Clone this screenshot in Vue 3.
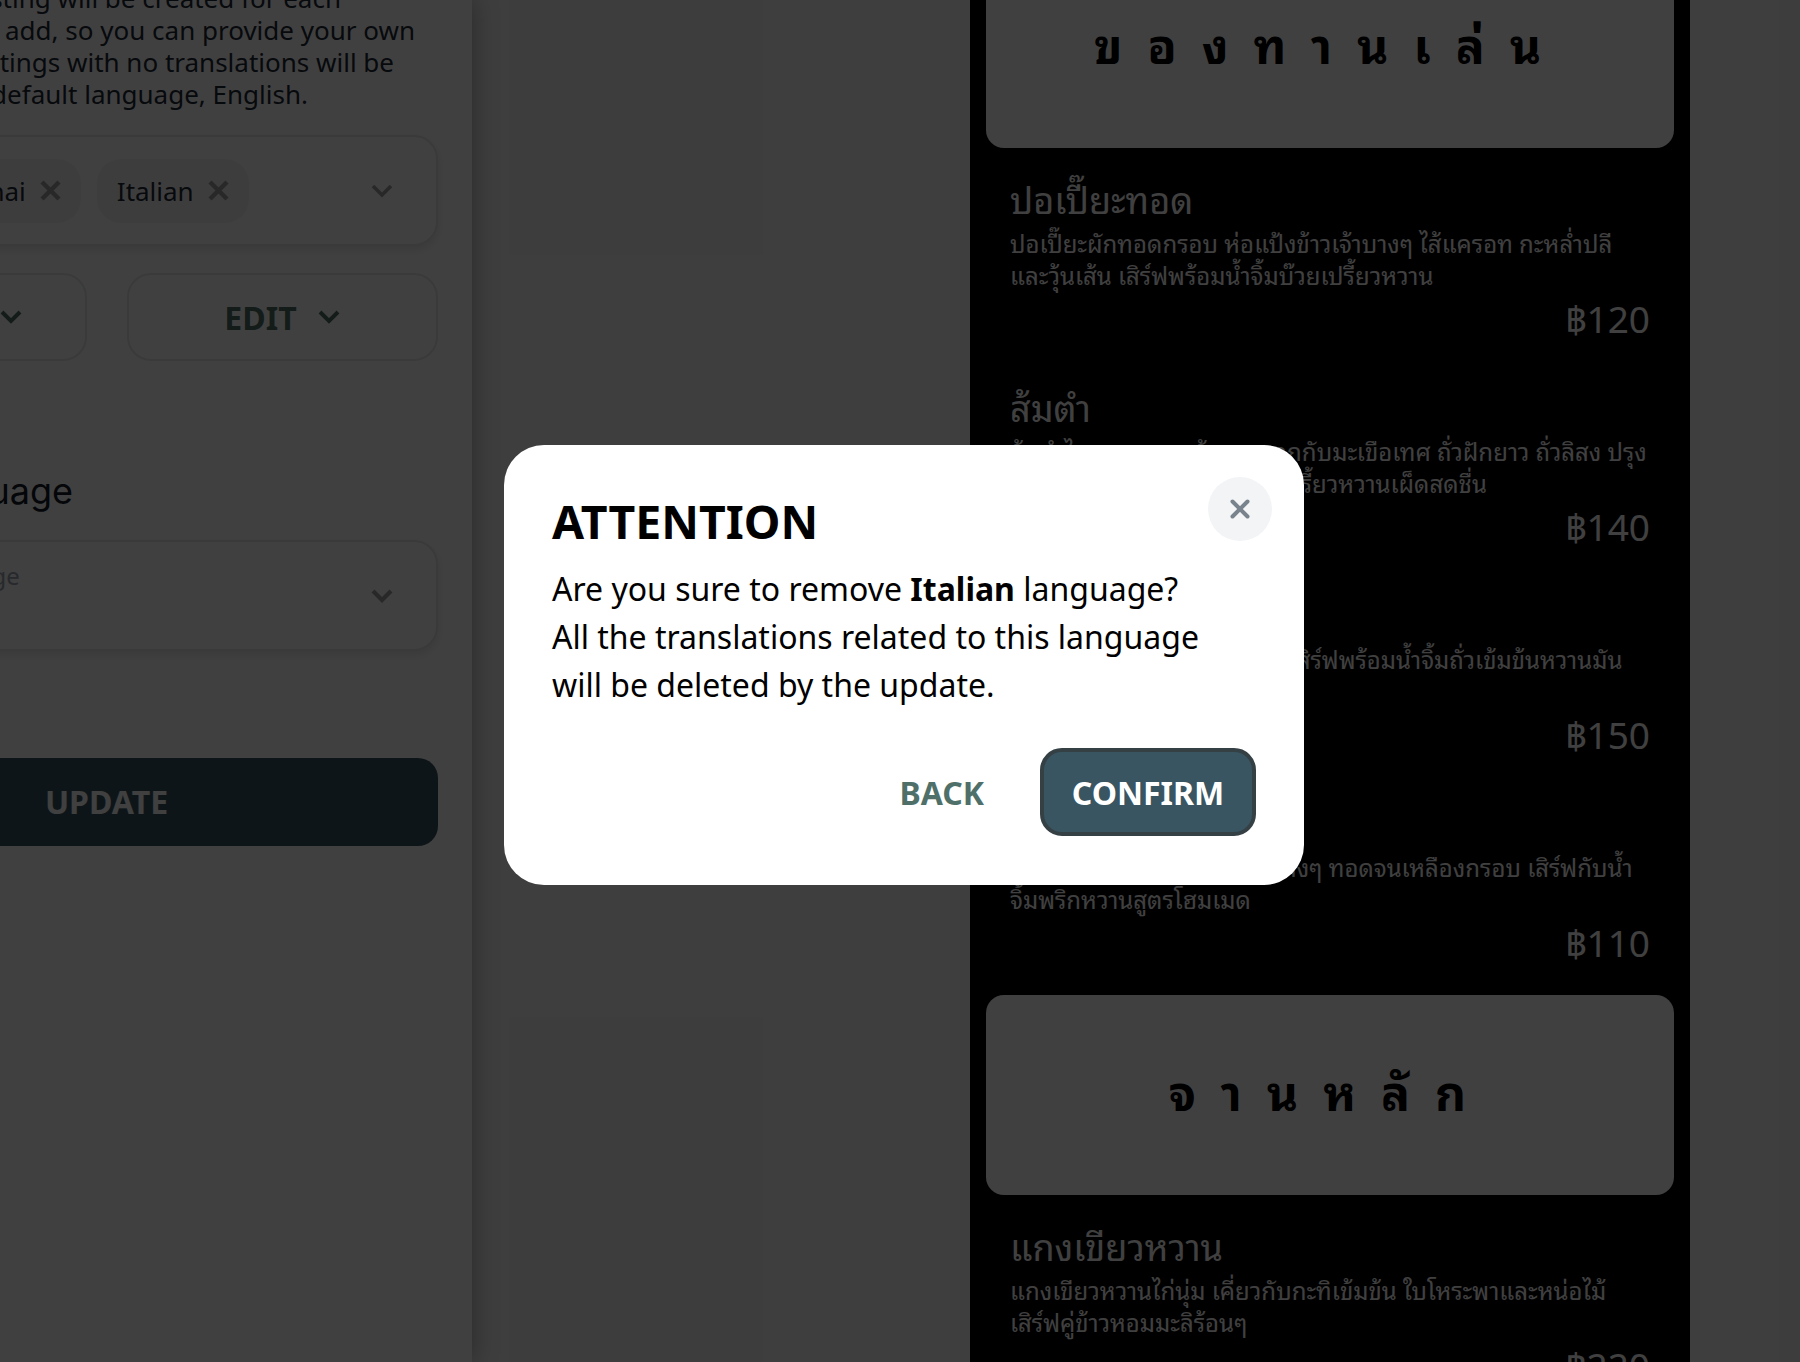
<script setup>
const items1 = [
  { name: 'ปอเปี๊ยะทอด', desc: ['ปอเปี๊ยะผักทอดกรอบ ห่อแป้งข้าวเจ้าบางๆ ไส้แครอท กะหล่ำปลี', 'และวุ้นเส้น เสิร์ฟพร้อมน้ำจิ้มบ๊วยเปรี้ยวหวาน'], price: '฿120' },
  { name: 'ส้มตำ', desc: ['ส้มตำไทย มะละกอเส้นสด คลุกกับมะเขือเทศ ถั่วฝักยาว ถั่วลิสง ปรุง', 'รสด้วยน้ำปลาและมะนาว\u00a0 รสเปรี้ยวหวานเผ็ดสดชื่น'], price: '฿140' },
  { name: 'หมูสะเต๊ะ', desc: ['หมูหมักเครื่องเทศย่างหอมๆ เสิร์ฟพร้อมน้ำจิ้มถั่วเข้มข้นหวานมัน', 'และอาจาดแตงกวา'], price: '฿150' },
  { name: 'ทอดมันกุ้ง', desc: ['ทอดมันกุ้ง ชุบเกล็ดขนมปังบางๆ ทอดจนเหลืองกรอบ เสิร์ฟกับน้ำ', 'จิ้มพริกหวานสูตรโฮมเมด'], price: '฿110' },
]
const items2 = [
  { name: 'แกงเขียวหวาน', desc: ['แกงเขียวหวานไก่นุ่ม เคี่ยวกับกะทิเข้มข้น ใบโหระพาและหน่อไม้', 'เสิร์ฟคู่ข้าวหอมมะลิร้อนๆ'], price: '฿220' },
]
</script>

<template>
  <div class="page">
    <aside class="settings">
      <div class="settings-inner">
        <p class="help">
          <span class="l1">A new listing will be created for each</span>
          <span class="l2">language you add, so you can provide your own</span>
          <span class="l3">Listings with no translations will be</span>
          <span class="l4">shown in the default language, English.</span>
        </p>
        <div class="select multi">
          <div class="chip"><span>Thai</span><svg class="x" viewBox="0 0 21 21"><path d="M2 2l17 17M19 2L2 19" /></svg></div>
          <div class="chip"><span>Italian</span><svg class="x" viewBox="0 0 21 21"><path d="M2 2l17 17M19 2L2 19" /></svg></div>
          <svg class="chev grey" viewBox="0 0 24 24"><path d="M3 7l9 9 9-9" /></svg>
        </div>
        <div class="btn-row">
          <button class="outline">PREVIEW<svg class="chev teal" viewBox="0 0 24 24"><path d="M3 7l9 9 9-9" /></svg></button>
          <button class="outline edit">EDIT<svg class="chev teal" viewBox="0 0 24 24"><path d="M3 7l9 9 9-9" /></svg></button>
        </div>
        <h2 class="heading">Default language</h2>
        <div class="select single">
          <span class="placeholder">Select language</span>
          <svg class="chev grey thick" viewBox="0 0 24 24"><path d="M3 7l9 9 9-9" /></svg>
        </div>
        <button class="update">UPDATE</button>
      </div>
    </aside>

    <main class="menu">
      <div class="menu-inner">
        <div class="section"><span>ของทานเล่น</span></div>
        <div v-for="it in items1" :key="it.name" class="item">
          <div class="name">{{ it.name }}</div>
          <div class="desc"><div v-for="d in it.desc" :key="d">{{ d }}</div></div>
          <div class="price">{{ it.price }}</div>
        </div>
        <div class="section second"><span>จานหลัก</span></div>
        <div v-for="it in items2" :key="it.name" class="item">
          <div class="name">{{ it.name }}</div>
          <div class="desc"><div v-for="d in it.desc" :key="d">{{ d }}</div></div>
          <div class="price">{{ it.price }}</div>
        </div>
      </div>
    </main>

    <div class="overlay">
      <div class="modal">
        <button class="close" aria-label="Close">
          <svg viewBox="0 0 20 20"><path d="M2.5 2.5l15 15M17.5 2.5l-15 15" /></svg>
        </button>
        <h1 class="title">ATTENTION</h1>
        <p class="body">Are you sure to remove <b>Italian</b> language?<br />All the translations related to this language<br />will be deleted by the update.</p>
        <div class="actions">
          <button class="back">BACK</button>
          <button class="confirm">CONFIRM</button>
        </div>
      </div>
    </div>
  </div>
</template>

<style>
html, body { margin: 0; background: #fff; }
</style>

<style scoped>
.page {
  position: relative;
  display: flex;
  width: 1800px;
  height: 1362px;
  overflow: hidden;
  background: #f5f5f5;
  font-family: "Noto Sans", sans-serif;
}
button { font-family: inherit; cursor: pointer; }
.settings {
  width: 472px;
  height: 100%;
  flex: none;
  background: #fff;
  box-shadow: 0 0 24px rgba(0, 0, 0, 0.35);
  overflow: hidden;
}
.settings-inner {
  width: 663px;
  margin-left: -225px;
  margin-top: -18px;
}
.help {
  margin: 0;
  font-size: 26px;
  line-height: 32px;
  color: #1f2937;
  text-align: right;
}
.help span { display: block; white-space: nowrap; }
.l1 { margin-right: 97px; }
.l2 { margin-right: 23px; }
.l3 { margin-right: 44px; }
.l4 { margin-right: 130px; }
.select {
  box-sizing: border-box;
  border: 2px solid #e5e7eb;
  border-radius: 24px;
  box-shadow: 0 4px 8px rgba(0, 0, 0, 0.1);
  background: #fff;
  display: flex;
  align-items: center;
}
.multi {
  height: 111px;
  margin-top: 25px;
  padding: 0 42px 0 177px;
  gap: 16px;
}
.chip {
  height: 64px;
  box-sizing: border-box;
  padding: 0 20px;
  border-radius: 24px;
  background: #f3f4f6;
  display: flex;
  align-items: center;
  gap: 14px;
  font-size: 26px;
  color: #1f2937;
}
.x { width: 21px; height: 21px; fill: none; stroke: #a0a0a0; stroke-width: 4.5; }
.chev { width: 24px; height: 24px; fill: none; stroke-width: 3.6; flex: none; }
.chev.grey { stroke: #a0a0a0; margin-left: auto; }
.chev.thick { stroke-width: 4.2; }
.chev.teal { stroke: #4f7069; margin-left: 20px; stroke-width: 4; }
.btn-row {
  display: flex;
  gap: 40px;
  margin-top: 27px;
}
.outline {
  flex: 1;
  height: 88px;
  background: #fff;
  border: 2px solid #e5e7eb;
  border-radius: 24px;
  color: #4f7069;
  font-weight: 700;
  font-size: 32px;
  display: flex;
  align-items: center;
  justify-content: center;
}
.outline.edit { flex: none; width: 311px; }
.heading {
  margin: 108px 365px 0 0;
  font-family: Inter, sans-serif;
  font-weight: 400;
  font-size: 36px;
  line-height: 44px;
  color: #111827;
  text-align: right;
  white-space: nowrap;
}
.single {
  height: 111px;
  margin-top: 27px;
  padding: 0 42px 0 64px;
}
.placeholder { font-size: 24px; color: #9ca3af; margin-top: -41px; white-space: nowrap; }
.update {
  display: block;
  width: 100%;
  height: 88px;
  margin-top: 107px;
  padding: 0 0 2px;
  border: 0;
  border-radius: 20px;
  background: #395562;
  color: #fff;
  font-weight: 700;
  font-size: 32px;
  text-align: center;
}
.menu {
  width: 720px;
  height: 100%;
  flex: none;
  margin-left: 498px;
  background: #000;
  overflow: hidden;
  font-family: "Noto Sans Thai Looped", "Noto Sans", sans-serif;
}
.menu-inner { padding: 0 16px; margin-top: -52px; }
.section {
  height: 200px;
  box-sizing: border-box;
  padding-bottom: 12px;
  border-radius: 18px;
  background: #fff;
  display: flex;
  align-items: center;
  justify-content: center;
  color: #000;
  font-weight: 700;
  font-size: 48px;
  letter-spacing: 25px;
}
.section.second { margin-top: 15px; }
.item {
  padding: 24px 24px 0;
  height: 208px;
  box-sizing: border-box;
  color: #fff;
}
.name { font-size: 36px; line-height: 52px; }
.desc { font-size: 24px; line-height: 32px; margin-top: 2px; white-space: nowrap; }
.price { font-size: 37px; line-height: 50px; text-align: right; margin-top: 2px; }
.overlay {
  position: absolute;
  inset: 0;
  background: rgba(0, 0, 0, 0.75);
}
.modal {
  position: absolute;
  left: 504px;
  top: 445px;
  width: 800px;
  height: 440px;
  box-sizing: border-box;
  padding: 48px;
  background: #fff;
  border-radius: 40px;
  color: #000;
}
.close {
  position: absolute;
  top: 32px;
  right: 32px;
  width: 64px;
  height: 64px;
  border: 0;
  border-radius: 50%;
  background: #f3f4f6;
  padding: 0;
  display: flex;
  align-items: center;
  justify-content: center;
}
.close svg { width: 20px; height: 20px; fill: none; stroke: #78838e; stroke-width: 4; stroke-linecap: round; }
.title {
  margin: -1px 0 0;
  font-size: 46.4px;
  line-height: 58px;
  font-weight: 700;
}
.body {
  margin: 15px 0 0;
  font-size: 32px;
  line-height: 48px;
}
.actions {
  display: flex;
  justify-content: flex-end;
  align-items: center;
  gap: 56px;
  margin-top: 39px;
}
.back {
  border: 0;
  background: none;
  padding: 0;
  color: #4f7069;
  font-size: 32px;
  font-weight: 700;
}
.confirm {
  width: 216px;
  height: 88px;
  box-sizing: border-box;
  border: 4px solid #354045;
  border-radius: 22px;
  background: #395562;
  color: #fff;
  font-size: 32px;
  font-weight: 700;
}
</style>
